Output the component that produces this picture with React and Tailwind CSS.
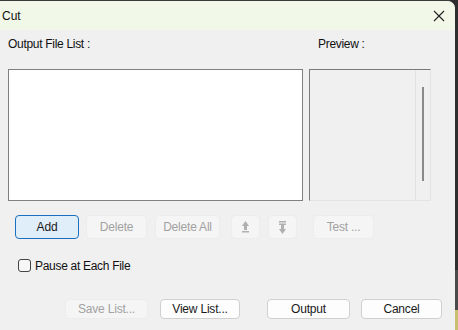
const font = { fontFamily: '"Liberation Sans", Arial, sans-serif' };

function Btn({ children, className = "", disabled, primary }) {
  let look = "border-[#d0d0d0] bg-[#fdfdfd] text-[#1a1a1a]";
  if (primary) look = "border-[#1a6fc0] bg-[#e0eef9] text-[#1a1a1a]";
  if (disabled) look = "border-[#ececec] bg-[#f5f5f5] text-[#a2a2a2]";
  return (
    <div
      className={`flex items-center justify-center rounded-[4px] border text-[12px] tracking-[-0.2px] leading-none ${look} ${className}`}
    >
      {children}
    </div>
  );
}

function UpIcon() {
  return (
    <svg width="9" height="13" viewBox="0 0 9 13" fill="#b0b0b0">
      <polygon points="4.5,0 8,5 1,5" />
      <rect x="3" y="5" width="3" height="4" />
      <rect x="1" y="10" width="7" height="1.5" />
    </svg>
  );
}

function DownIcon() {
  return (
    <svg width="9" height="13" viewBox="0 0 9 13" fill="#b0b0b0">
      <rect x="1" y="0" width="7" height="1.5" />
      <rect x="1" y="2.5" width="7" height="1.5" />
      <rect x="3" y="4" width="3" height="4" />
      <polygon points="1,8 8,8 4.5,13" />
    </svg>
  );
}

export default function App() {
  return (
    <div className="w-[458px] h-[330px] flex bg-[#2a2a2a] overflow-hidden" style={font}>
      <div className="w-[455px] h-full flex flex-col bg-[#f0f0f0] border-t border-[#3a3a3a] rounded-tr-[8px] overflow-hidden">
        <div className="h-[29px] flex items-center justify-between bg-[#f2f8e8] pl-[2px] pr-[10px]">
          <span className="text-[12px] text-[#111]">Cut</span>
          <svg width="12" height="12" viewBox="0 0 12 12" stroke="#222" strokeWidth="1.1">
            <line x1="1" y1="1" x2="11" y2="11" />
            <line x1="11" y1="1" x2="1" y2="11" />
          </svg>
        </div>
        <div className="flex flex-col px-[8px]">
          <div className="mt-[6px] h-[16px] flex items-center text-[12px] tracking-[-0.3px] text-[#111]">
            <span className="w-[310px]">Output File List :</span>
            <span>Preview :</span>
          </div>
          <div className="mt-[17px] flex">
            <div className="w-[295px] h-[132px] bg-white border border-[#808080]" />
            <div className="ml-[6px] w-[122px] h-[132px] flex border border-t-[#7a7a7a] border-l-[#7a7a7a] border-r-[#e4e4e4] border-b-[#e4e4e4] bg-[#f0f0f0]">
              <div className="flex-1" />
              <div className="w-[15px] border-l border-[#e2e2e2] flex justify-center pt-[17px]">
                <div className="w-[2px] h-[94px] bg-[#8a8a8a]" />
              </div>
            </div>
          </div>
          <div className="mt-[14px] h-[24px] flex">
            <Btn primary className="ml-[7px] w-[64px]">Add</Btn>
            <Btn disabled className="ml-[7px] w-[61px]">Delete</Btn>
            <Btn disabled className="ml-[8px] w-[65px]">Delete All</Btn>
            <Btn disabled className="ml-[11px] w-[29px]"><UpIcon /></Btn>
            <Btn disabled className="ml-[8px] w-[29px]"><DownIcon /></Btn>
            <Btn disabled className="ml-[16px] w-[61px]">Test ...</Btn>
          </div>
          <div className="mt-[20px] h-[13px] flex items-center">
            <div className="ml-[10px] w-[13px] h-[13px] rounded-[3px] border border-[#444] bg-[#f7f7f7]" />
            <span className="ml-[4px] text-[12px] tracking-[-0.3px] text-[#111]">Pause at Each File</span>
          </div>
          <div className="mt-[27px] h-[20px] flex">
            <Btn disabled className="ml-[57px] w-[83px]">Save List...</Btn>
            <Btn className="ml-[12px] w-[80px]">View List...</Btn>
            <Btn className="ml-[27px] w-[83px]">Output</Btn>
            <Btn className="ml-[11px] w-[81px]">Cancel</Btn>
          </div>
        </div>
      </div>
      <div className="flex-1 flex flex-col">
        <div className="flex-1 bg-[#2e2e2e]" />
        <div className="h-[40px] bg-[#4a4a4a]" />
        <div className="h-[20px] bg-[#c8c070]" />
      </div>
    </div>
  );
}
